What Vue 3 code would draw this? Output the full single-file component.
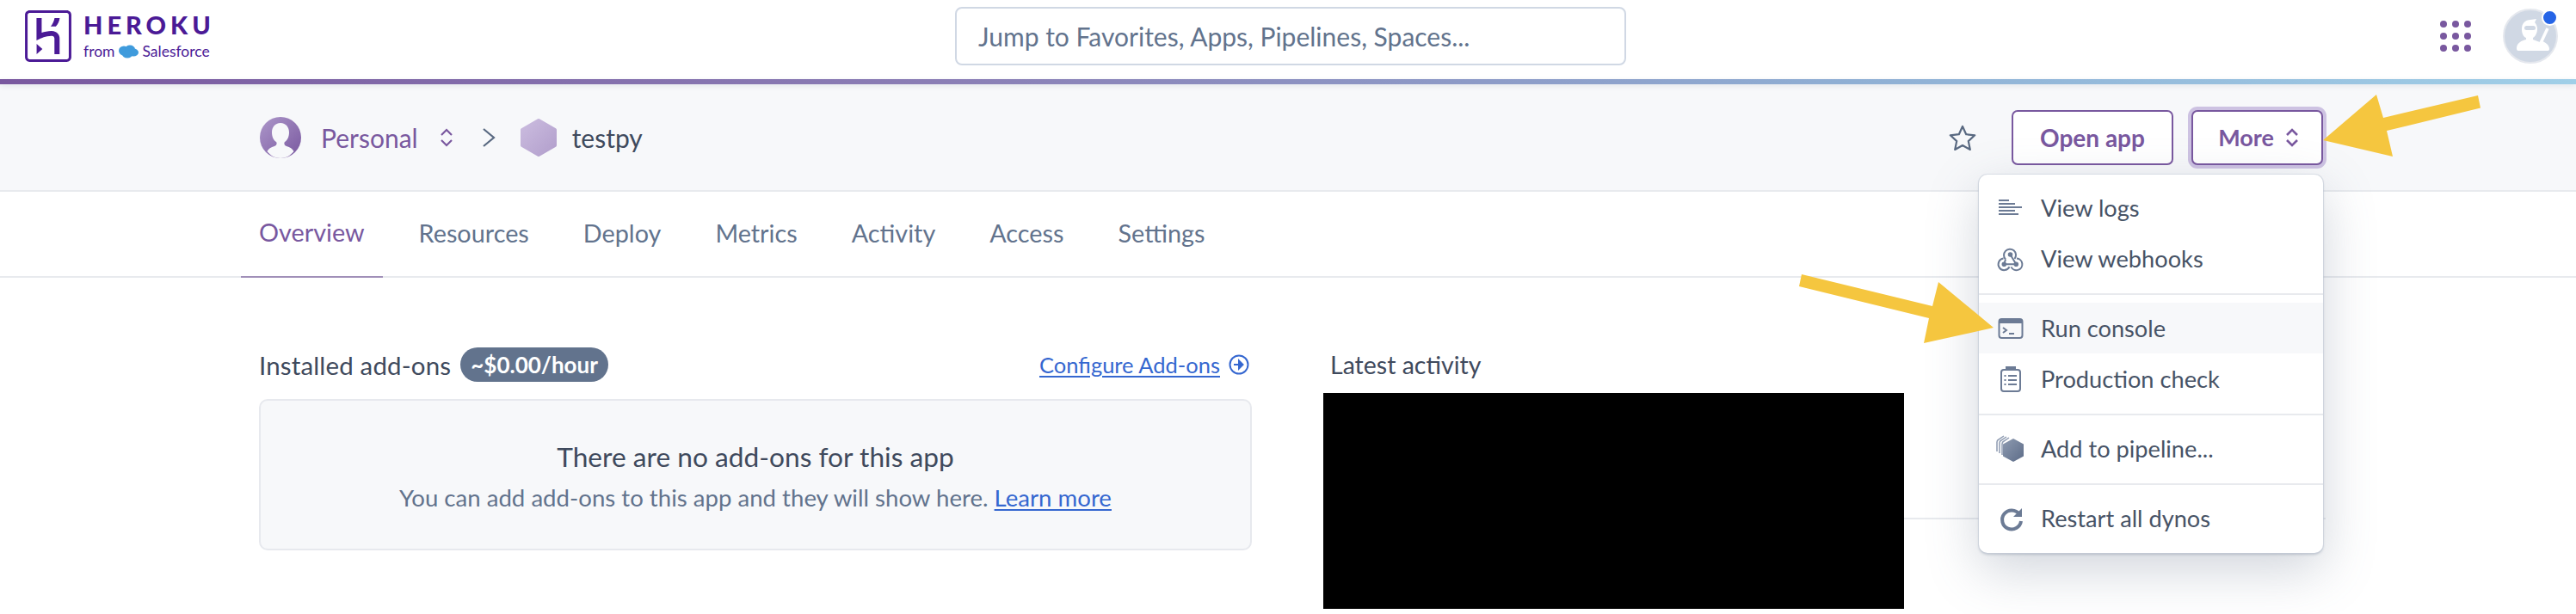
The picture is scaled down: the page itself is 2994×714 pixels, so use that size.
<template>
  <div class="page">
    <header class="topbar">
      <div class="brand">
        <svg class="brand-mark" width="60" height="60" viewBox="0 0 24 24" fill="#4b1a96">
          <path d="M20.61 0H3.39C2.189 0 1.23.96 1.23 2.16v19.681c0 1.198.959 2.159 2.16 2.159h17.22c1.2 0 2.159-.961 2.159-2.159V2.16C22.77.96 21.811 0 20.61 0zm.96 21.841c0 .539-.421.96-.96.96H3.39c-.54 0-.96-.421-.96-.96V2.16c0-.54.42-.961.96-.961h17.22c.539 0 .96.421.96.961v19.681zM6.63 20.399L9.33 18l-2.7-2.4v4.799zm9.72-9.719c-.479-.48-1.379-1.08-2.879-1.08-1.621 0-3.301.421-4.5.84V3.6h-2.4v10.38l1.68-.78s2.76-1.26 5.16-1.26c1.2 0 1.5.66 1.5 1.26v7.2h2.4v-7.2c.059-.179.059-1.501-.961-2.52zM13.17 7.5h2.4c1.08-1.26 1.62-2.521 1.8-3.9h-2.399c-.241 1.379-.841 2.64-1.801 3.9z" />
        </svg>
        <div class="brand-text">
          <div class="brand-name">HEROKU</div>
          <div class="brand-from">
            <span>from</span>
            <svg width="24" height="16" viewBox="0 0 24 16" fill="#3f9bdc">
              <ellipse cx="7" cy="7" rx="6" ry="5.5" />
              <ellipse cx="14" cy="5.5" rx="6" ry="5" />
              <ellipse cx="18" cy="9" rx="6" ry="4.5" />
              <ellipse cx="11" cy="11" rx="6" ry="4.6" />
            </svg>
            <span>Salesforce</span>
          </div>
        </div>
      </div>
      <div class="search">Jump to Favorites, Apps, Pipelines, Spaces...</div>
      <div class="top-right">
        <div class="apps-grid">
          <i v-for="n in 9" :key="n"></i>
        </div>
        <div class="user">
          <svg width="60" height="60" viewBox="0 0 60 60" fill="#fff">
            <path d="M20 22c0-7 4-11 10-11l7-1-2 4c2 2 3 5 3 8 0 5-3 9-5 10v3h-8v-3c-3-1-5-5-5-10z" />
            <rect x="23" y="18" width="13" height="5" rx="2.500" fill="#d0d8e4" />
            <path d="M14 44c0-6 6-9 11-10h8l8 3 3-1c5 2 8 5 8 9 0 1.500-1 2-2 2H16c-1.500 0-2-1-2-3z" />
            <path d="M50 21l-8 17" stroke="#fff" stroke-width="3.500" />
          </svg>
          <span class="user-dot"></span>
        </div>
      </div>
    </header>
    <div class="accent"></div>

    <section class="app-bar">
      <div class="crumbs">
        <svg width="48" height="48" viewBox="0 0 48 48">
          <defs>
            <linearGradient id="personal" x1="0" y1="0" x2="1" y2="1">
              <stop offset="0" stop-color="#ad97ca" />
              <stop offset="1" stop-color="#79589f" />
            </linearGradient>
          </defs>
          <circle cx="24" cy="24" r="24" fill="url(#personal)" />
          <path d="M24 7c-6.500 0-10 5-10 11 0 5 2 9 5 11 1 1 1 4-2 5-4 1-7 3-8.500 6 4 5 9 8 15.500 8s11.500-3 15.500-8c-1.500-3-4.500-5-8.500-6-3-1-3-4-2-5 3-2 5-6 5-11 0-6-3.500-11-10-11z" fill="#f7f8fa" />
        </svg>
        <span class="team-name">Personal</span>
        <svg class="updown" width="16" height="22" viewBox="0 0 16 22" fill="none" stroke="#79589f" stroke-width="2.200">
          <path d="M2 8l6-6 6 6M2 14l6 6 6-6" />
        </svg>
        <svg class="crumb-sep" width="16" height="22" viewBox="0 0 16 22" fill="none" stroke="#596981" stroke-width="2.200">
          <path d="M2 1l12 10L2 21" />
        </svg>
        <svg width="44" height="46" viewBox="0 0 44 46">
          <defs>
            <linearGradient id="hexapp" x1="0" y1="0" x2="1" y2="1">
              <stop offset="0" stop-color="#cbbcdf" />
              <stop offset="1" stop-color="#b29fcc" />
            </linearGradient>
          </defs>
          <path d="M22 3l19 11v18L22 43 3 32V14z" fill="url(#hexapp)" stroke="url(#hexapp)" stroke-width="4" stroke-linejoin="round" />
        </svg>
        <span class="app-name">testpy</span>
      </div>
      <div class="actions">
        <svg class="star" width="32" height="30" viewBox="0 0 32 30" fill="none" stroke="#596981" stroke-width="2.200" stroke-linejoin="round">
          <path d="M16 2l4.200 9.200 10 1.100-7.400 6.800 2 9.900-8.800-5-8.800 5 2-9.900-7.400-6.800 10-1.100z" />
        </svg>
        <div class="btn">Open app</div>
        <div class="btn btn-focus">
          More
          <svg width="16" height="22" viewBox="0 0 16 22" fill="none" stroke="#79589f" stroke-width="2.600">
            <path d="M2 8l6-6 6 6M2 14l6 6 6-6" />
          </svg>
        </div>
      </div>
    </section>

    <nav class="tabs">
      <div v-for="(tab, i) in tabs" :key="tab" class="tab" :class="{ active: i === 0 }">{{ tab }}</div>
    </nav>

    <main class="content">
      <section class="addons">
        <div class="addons-head">
          <div class="addons-title">
            <span class="addons-label">Installed add-ons</span>
            <span class="cost">~$0.00/hour</span>
          </div>
          <div class="configure">
            <span>Configure Add-ons</span>
            <svg width="24" height="24" viewBox="0 0 24 24" fill="none" stroke="#3567d0" stroke-width="2">
              <circle cx="12" cy="12" r="10.500" />
              <path d="M6 12h7M12 7.500l4.500 4.500-4.500 4.500z" fill="#3567d0" />
            </svg>
          </div>
        </div>
        <div class="empty">
          <div class="empty-title">There are no add-ons for this app</div>
          <div class="empty-text">You can add add-ons to this app and they will show here. <span class="link">Learn more</span></div>
        </div>
      </section>
      <section class="activity">
        <div class="activity-title">Latest activity</div>
        <div class="activity-row">
          <div class="redacted"></div>
          <div class="activity-rule"></div>
        </div>
      </section>
    </main>

    <div class="menu">
      <div v-for="(group, g) in menu" :key="g" class="menu-group">
        <div v-for="item in group" :key="item.label" class="menu-item" :class="{ hover: item.icon === 'console' }">
          <svg class="menu-icon" width="34" height="34" viewBox="0 0 34 34">
            <g v-if="item.icon === 'logs'" fill="#6c7b95">
              <rect x="3" y="7" width="12" height="2" />
              <rect x="3" y="11" width="19" height="2" />
              <rect x="3" y="15" width="27" height="2" />
              <rect x="3" y="19" width="19" height="2" />
              <rect x="3" y="23" width="23" height="2" />
            </g>
            <g v-else-if="item.icon === 'hooks'" fill="none" stroke="#6c7b95" stroke-width="2">
              <path d="M11 17.500A7 7 0 1 1 21.500 17M16.500 12l6.800 11.300H9.300M11 17.500l-1.700 5.800M8.500 16.600a6.800 6.800 0 1 0 7 9.700M24 16.600a6.800 6.800 0 1 1-6.500 9.800" />
              <circle cx="16.500" cy="12" r="1.800" fill="#6c7b95" />
              <circle cx="9.300" cy="23.300" r="1.800" fill="#6c7b95" />
              <circle cx="23.300" cy="23.300" r="1.800" fill="#6c7b95" />
            </g>
            <g v-else-if="item.icon === 'console'">
              <rect x="3.500" y="6" width="27" height="22" rx="3" fill="none" stroke="#6c7b95" stroke-width="2" />
              <path d="M3 9a3 3 0 0 1 3-3h22a3 3 0 0 1 3 3v2H3z" fill="#6c7b95" />
              <path d="M8 16l4 3-4 3M15 23h6" fill="none" stroke="#6c7b95" stroke-width="2" />
            </g>
            <g v-else-if="item.icon === 'check'" fill="none" stroke="#6c7b95" stroke-width="2">
              <rect x="6" y="6" width="22" height="25" rx="3" />
              <path d="M12 6V3h10v3z" fill="#6c7b95" />
              <path d="M14 13h10M14 18h10M14 23h10M9.500 13h2M9.500 18h2M9.500 23h2" />
            </g>
            <g v-else-if="item.icon === 'pipeline'">
              <defs>
                <linearGradient id="pipehex" x1="0" y1="0" x2="1" y2="1">
                  <stop offset="0" stop-color="#8e9bb1" />
                  <stop offset="1" stop-color="#5d6c88" />
                </linearGradient>
              </defs>
              <path d="M1 20V9q0-2 2-3l6-4M4 22V10q0-2 2-3l6-4M7 24V11q0-2 2-3l6-4" fill="none" stroke="#8e9bb1" stroke-width="1.500" />
              <path d="M20 5l12 6.500v14L20 32l-12-6.500v-14z" fill="url(#pipehex)" />
            </g>
            <g v-else fill="none" stroke="#6c7b95" stroke-width="4">
              <path d="M27 12a11 11 0 1 0 2 8" />
              <path d="M30 5v10H20z" fill="#6c7b95" stroke="none" />
            </g>
          </svg>
          <span>{{ item.label }}</span>
        </div>
      </div>
    </div>

    <svg class="arrows" width="2994" height="714" viewBox="0 0 2994 714" fill="#f5c63f">
      <path d="M2700 163L2762 110L2770 137L2880 111L2883 125.500L2774 152L2781 182z" />
      <path d="M2094 319L2091 333L2242 370L2236 399L2317 381L2253 328L2246 356z" />
    </svg>
  </div>
</template>

<script setup>
const tabs = ['Overview', 'Resources', 'Deploy', 'Metrics', 'Activity', 'Access', 'Settings']

const menu = [
  [
    { icon: 'logs', label: 'View logs' },
    { icon: 'hooks', label: 'View webhooks' }
  ],
  [
    { icon: 'console', label: 'Run console' },
    { icon: 'check', label: 'Production check' }
  ],
  [{ icon: 'pipeline', label: 'Add to pipeline...' }],
  [{ icon: 'restart', label: 'Restart all dynos' }]
]
</script>

<style>
html,
body {
  background: #fff;
  overflow: hidden;
}
</style>

<style scoped>
.page {
  position: relative;
  width: 2994px;
  height: 714px;
  overflow: hidden;
  background: #fff;
  font-family: Lato, "Noto Sans", sans-serif;
  color: #3f4a5d;
}

/* top bar */
.topbar {
  display: grid;
  grid-template-columns: 1110px 780px 1fr;
  align-items: center;
  box-sizing: border-box;
  height: 92px;
  padding-bottom: 8px;
}

.brand {
  display: flex;
  align-items: center;
  padding-left: 26px;
}

.brand-text {
  margin-left: 11px;
  color: #4b1a96;
}

.brand-name {
  font-size: 29px;
  font-weight: 900;
  letter-spacing: 5px;
  line-height: 30px;
}

.brand-from {
  display: flex;
  align-items: center;
  gap: 4px;
  margin-top: 5px;
  font-size: 17.500px;
  line-height: 22px;
}

.search {
  display: flex;
  align-items: center;
  height: 68px;
  box-sizing: border-box;
  padding-left: 25px;
  border: 2px solid #d0d8e4;
  border-radius: 8px;
  font-size: 30px;
  color: #62738d;
}

.top-right {
  display: flex;
  align-items: center;
  justify-content: flex-end;
  gap: 37px;
  padding-right: 21px;
}

.apps-grid {
  display: grid;
  grid-template-columns: repeat(3, 8px);
  gap: 6px;
}

.apps-grid i {
  width: 8px;
  height: 8px;
  border-radius: 50%;
  background: #79589f;
}

.user {
  position: relative;
  box-sizing: border-box;
  width: 64px;
  height: 64px;
  border: 2px solid #e5e8ee;
  border-radius: 50%;
  background: #d0d8e4;
}

.user svg {
  display: block;
}

.user-dot {
  position: absolute;
  top: -1px;
  right: -2px;
  width: 15px;
  height: 15px;
  border: 2.500px solid #fff;
  border-radius: 50%;
  background: #2564e6;
}

.accent {
  position: relative;
  height: 6px;
  background: linear-gradient(90deg, #79589f 0%, #8a7db5 36%, #8fafd4 72%, #a0cfe8 100%);
  box-shadow: 0 2px 6px rgba(89, 105, 129, 0.12);
}

/* app header */
.app-bar {
  display: flex;
  align-items: center;
  justify-content: space-between;
  box-sizing: border-box;
  height: 125px;
  padding: 0 294px 0 302px;
  background: #f7f8fa;
  border-bottom: 2px solid #e8eaee;
}

.crumbs {
  display: flex;
  align-items: center;
}

.team-name {
  margin-left: 23px;
  font-size: 30px;
  color: #79589f;
}

.updown {
  margin-left: 25px;
}

.crumb-sep {
  margin-left: 33px;
}

.crumb-sep + svg {
  margin-left: 28px;
}

.app-name {
  margin-left: 17px;
  font-size: 30px;
}

.actions {
  display: flex;
  align-items: center;
}

.star {
  margin-right: 41px;
}

.btn {
  display: flex;
  align-items: center;
  justify-content: center;
  gap: 13px;
  box-sizing: border-box;
  width: 188px;
  height: 64px;
  border: 2px solid #79589f;
  border-radius: 7px;
  background: #fff;
  font-size: 28px;
  font-weight: 700;
  color: #79589f;
}

.btn-focus {
  width: 153px;
  margin-left: 21px;
  padding-left: 3px;
  font-size: 27px;
  box-shadow: 0 0 0 4px #cdc2e2;
}

/* tabs */
.tabs {
  display: flex;
  gap: 21px;
  box-sizing: border-box;
  height: 100px;
  padding-left: 280px;
  border-bottom: 2px solid #e8eaee;
}

.tab {
  display: flex;
  align-items: center;
  height: 100px;
  box-sizing: border-box;
  padding: 0 21px 4px;
  font-size: 28.800px;
  color: #62738d;
}

.tab.active {
  color: #79589f;
  border-bottom: 2px solid #a08fb8;
}

/* main */
.content {
  display: grid;
  grid-template-columns: 1154px 1fr;
  column-gap: 83px;
  padding: 81px 0 0 301px;
}

.addons-head {
  display: flex;
  align-items: center;
  justify-content: space-between;
  height: 40px;
}

.addons-title {
  display: flex;
  align-items: center;
  gap: 11px;
  font-size: 28px;
}

.addons-label {
  font-size: 29.500px;
  letter-spacing: 0.150px;
}

.cost {
  display: flex;
  align-items: center;
  height: 40px;
  padding: 0 12px;
  border-radius: 20px;
  background: #62738d;
  color: #fff;
  font-size: 26px;
  font-weight: 700;
}

.configure {
  display: flex;
  align-items: center;
  gap: 10px;
  margin-right: 3px;
  font-size: 25.500px;
  color: #3567d0;
}

.configure span,
.link {
  text-decoration: underline;
  text-underline-offset: 3px;
  color: #3567d0;
}

.empty {
  display: flex;
  flex-direction: column;
  align-items: center;
  box-sizing: border-box;
  height: 176px;
  margin-top: 20px;
  padding-top: 45px;
  border: 2px solid #e7e9ee;
  border-radius: 10px;
  background: #f7f8fa;
}

.empty-title {
  font-size: 31.700px;
  line-height: 40px;
}

.empty-text {
  margin-top: 10px;
  font-size: 27.600px;
  line-height: 36px;
  color: #62738d;
}

.activity-title {
  height: 40px;
  padding-left: 8px;
  font-size: 28.500px;
  line-height: 40px;
}

.activity-row {
  display: flex;
  margin-top: 13px;
}

.redacted {
  width: 675px;
  height: 251px;
  background: #000;
}

.activity-rule {
  width: 490px;
  height: 2px;
  margin-top: 145px;
  background: #e8eaee;
}

/* dropdown */
.menu {
  position: absolute;
  top: 203px;
  left: 2300px;
  width: 400px;
  border-radius: 10px;
  background: #fff;
  box-shadow: 0 0 0 1px rgba(200, 206, 218, 0.6), 0 2px 3px rgba(89, 105, 129, 0.3), 0 20px 60px rgba(89, 105, 129, 0.28);
}

.menu-group {
  padding: 9px 0 11px;
  border-bottom: 2px solid #e8eaee;
}

.menu-group:last-child {
  border-bottom: 0;
}

.menu-item {
  display: flex;
  align-items: center;
  height: 59px;
  padding-left: 20px;
  font-size: 27.200px;
  color: #475366;
}

.menu-item.hover {
  background: #f7f8fa;
}

.menu-icon {
  flex: none;
  margin-right: 18px;
}

.arrows {
  position: absolute;
  top: 0;
  left: 0;
  pointer-events: none;
}
</style>
